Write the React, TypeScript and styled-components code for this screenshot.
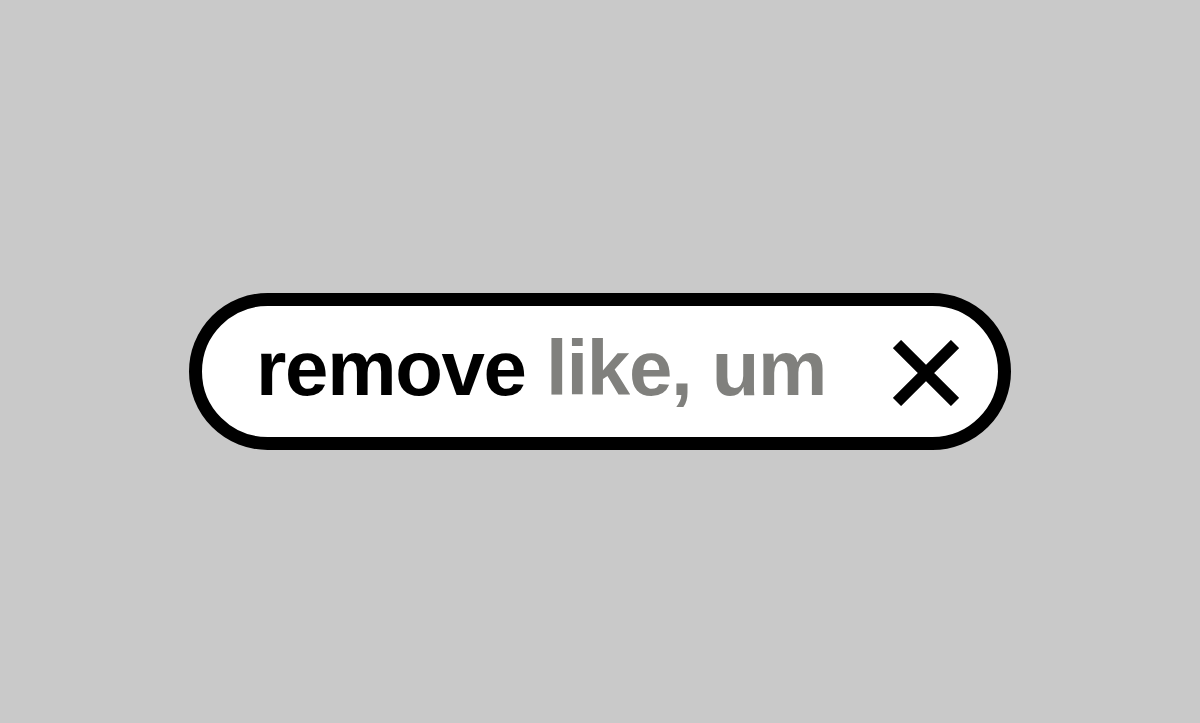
import React from "react";
import styled, { createGlobalStyle } from "styled-components";

const GlobalStyle = createGlobalStyle`
  html, body {
    margin: 0;
    padding: 0;
    height: 100%;
  }
  body {
    background: #c9c9c9;
    font-family: "Liberation Sans", Arial, sans-serif;
  }
  #root {
    height: 100%;
  }
`;

const Stage = styled.main`
  height: 100%;
  display: flex;
  align-items: center;
  justify-content: center;
  padding-top: 20px;
  box-sizing: border-box;
`;

const Pill = styled.div`
  box-sizing: border-box;
  width: 822px;
  height: 157px;
  border: 13px solid #000;
  border-radius: 80px;
  background: #fff;
  display: flex;
  align-items: center;
  justify-content: space-between;
  padding: 0 39px 0 54px;
`;

const Query = styled.div`
  font-size: 78px;
  font-weight: 700;
  line-height: 1;
  letter-spacing: -1.3px;
  white-space: nowrap;
  margin-top: -7px;
`;

const Word = styled.span<{ $muted?: boolean }>`
  color: ${(p) => (p.$muted ? "#80807d" : "#000")};
`;

const ClearButton = styled.button`
  border: 0;
  padding: 0;
  background: none;
  width: 66px;
  height: 66px;
  display: flex;
  cursor: pointer;
  margin-top: 3px;
`;

const CloseIcon = () => (
  <svg width="66" height="66" viewBox="0 0 66 66">
    <path
      d="M4 4 L62 62 M62 4 L4 62"
      stroke="#000"
      strokeWidth="11.5"
      strokeLinecap="butt"
      fill="none"
    />
  </svg>
);

const App: React.FC = () => {
  return (
    <>
      <GlobalStyle />
      <Stage>
        <Pill>
          <Query>
            <Word>remove</Word> <Word $muted>like, um</Word>
          </Query>
          <ClearButton type="button" aria-label="Clear">
            <CloseIcon />
          </ClearButton>
        </Pill>
      </Stage>
    </>
  );
};

export default App;
